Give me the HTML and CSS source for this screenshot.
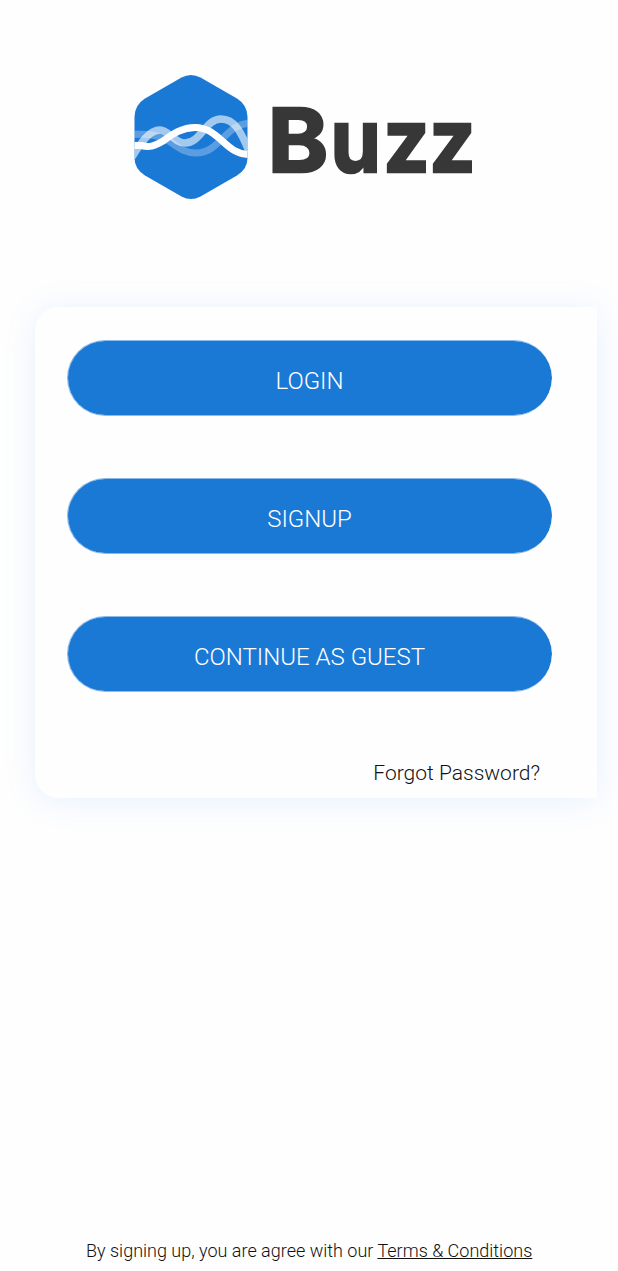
FILE: index.html
```html
<!DOCTYPE html>
<html lang="en">
<head>
<meta charset="utf-8">
<title>Buzz</title>
<link rel="stylesheet" href="styles.css">
</head>
<body>
<main class="screen">
  <header class="brand">
    <svg class="logo" width="344" height="126" viewBox="132 74 344 126" role="img" aria-label="Buzz">
      <defs>
        <clipPath id="hex"><path d="M181.500 77.500Q191 72.500 200.500 77.500L237 98.500Q247.500 105 247.500 117V158Q247.500 169 237 175.500L200.500 196.500Q191 201.500 181.500 196.500L145 175.500Q134.500 169 134.500 158V117Q134.500 105 145 98.500Z"/></clipPath>
      </defs>
      <g clip-path="url(#hex)">
        <rect x="134" y="74" width="114" height="126" fill="#1b79d6"/>
        <g fill="none" stroke="#fff">
          <path d="M132 134.500C146 133.500 157 134 169 141C178 147 184 153 196 153C220 153 225 124 250 123" stroke-width="7" opacity=".28"/>
          <path d="M132 157C141 143 149 130 160 130C169 130 174 143 185 143C201 143 205 119 221 119C236 119 242 135 249 151" stroke-width="7.500" opacity=".6"/>
          <path d="M132 145.500H141C149 147.500 154 146.500 163 141C173 134 182 127.500 195 127.500C220 127.500 225 155 250 154.500" stroke-width="7"/>
        </g>
      </g>
      <g class="wordmark">
        <text transform="translate(267.800 172) scale(1.040 1)">B</text>
        <text transform="translate(330.500 172) scale(.92 1)">u</text>
        <text transform="translate(383.200 172) scale(.92 1)">z</text>
        <text transform="translate(429.200 172) scale(.92 1)">z</text>
      </g>
    </svg>
  </header>
  <section class="card">
    <button class="button">LOGIN</button>
    <button class="button">SIGNUP</button>
    <button class="button">CONTINUE AS GUEST</button>
    <a class="forgot">Forgot Password?</a>
  </section>
  <footer class="terms">By signing up, you are agree with our <a class="terms-link">Terms &amp; Conditions</a></footer>
</main>
</body>
</html>
```
FILE: styles.css
```css
* { box-sizing: border-box; }
body {
  margin: 0;
  background: #fefefe;
  color: #111;
  font-family: Roboto, sans-serif;
  font-weight: 300;
}
.screen {
  display: flex;
  flex-direction: column;
  height: 1271px;
  overflow: hidden;
}
.brand {
  height: 307px;
  padding: 74px 0 0 132px;
}
.logo { display: block; overflow: visible; }
.wordmark {
  font-family: Inter, sans-serif;
  font-size: 88px;
  font-weight: 700;
  fill: #373737;
  stroke: #373737;
  stroke-width: 2.5px;
}
.card {
  display: flex;
  flex-direction: column;
  gap: 62px;
  width: 562px;
  height: 491px;
  margin-left: 35px;
  padding: 33px 45px 0 32px;
  border-radius: 24px 0 0 24px;
  background: #fefefe;
  box-shadow: 0 3px 33px rgba(66, 140, 255, .12);
}
.button {
  flex: none;
  height: 76px;
  padding: 6px 1px 0 0;
  border: 1px solid rgba(27, 121, 214, .5);
  border-right: 0;
  border-radius: 38px;
  background: #1b79d6;
  background-clip: padding-box;
  color: #fff;
  font: 300 24px/28px Roboto, sans-serif;
}
.forgot {
  align-self: flex-end;
  margin-right: 12px;
  font-size: 21px;
  line-height: 38px;
}
.terms {
  margin: auto 0 8px 86px;
  font-size: 18px;
  line-height: 24px;
  white-space: nowrap;
}
.terms-link { text-decoration: underline; }
```
